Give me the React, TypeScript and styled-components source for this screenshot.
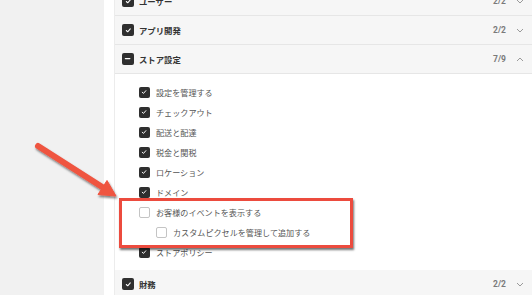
import React from "react";
import styled, { createGlobalStyle } from "styled-components";

const Global = createGlobalStyle`
  html, body { margin: 0; padding: 0; background: #fff; }
  body { font-family: "Noto Sans CJK JP", "Noto Sans", sans-serif; }
  * { box-sizing: border-box; }
`;

const Page = styled.div`
  position: relative;
  width: 532px;
  height: 295px;
  display: flex;
  overflow: hidden;
  background: #fff;
`;

const Sidebar = styled.div`
  width: 104px;
  flex: none;
  background: #f1f1f1;
`;

const Gutter = styled.div`
  width: 10px;
  flex: none;
  background: #fff;
`;

const Panel = styled.div`
  flex: 1;
  border-left: 1px solid #ececec;
  overflow: hidden;
`;

const List = styled.div`
  margin-top: -13px;
  display: flex;
  flex-direction: column;
`;

const Header = styled.div`
  height: 29px;
  display: flex;
  align-items: center;
  padding: 0 8px 0 7px;
  background: #f6f6f6;
  border-bottom: 1px solid #e6e6e6;
`;

const HeaderLabel = styled.span`
  flex: 1;
  margin-left: 5px;
  font-size: 8.4px;
  font-weight: 700;
  color: #333;
`;

const Count = styled.span`
  font-family: Roboto, "Liberation Sans", sans-serif;
  font-size: 8.5px;
  font-weight: 700;
  color: #7a7a7a;
  margin-right: 10px;
`;

const Body = styled.div`
  padding: 8px 0 8px 24px;
  display: flex;
  flex-direction: column;
  background: #fff;
`;

const Item = styled.div<{ $indent?: number }>`
  height: 20px;
  display: flex;
  align-items: center;
  padding-left: ${(p) => p.$indent ?? 0}px;
`;

const ItemLabel = styled.span`
  margin-left: 6px;
  font-size: 8.1px;
  color: #555;
`;

const Highlight = styled.div`
  position: relative;
  display: flex;
  flex-direction: column;
  &::after {
    content: "";
    position: absolute;
    left: -20px;
    top: -4px;
    width: 228px;
    height: 44px;
    border: 3px solid #ec4b3e;
    box-shadow: 1px 2px 2px rgba(0, 0, 0, 0.55);
    pointer-events: none;
  }
`;

const Box = styled.span<{ $size: number; $on: boolean }>`
  width: ${(p) => p.$size}px;
  height: ${(p) => p.$size}px;
  flex: none;
  border-radius: 2px;
  display: inline-flex;
  align-items: center;
  justify-content: center;
  background: ${(p) => (p.$on ? "#2f2f2f" : "#fff")};
  border: ${(p) => (p.$on ? "none" : "1px solid #c4c4c4")};
`;

const Overlay = styled.svg`
  position: absolute;
  left: 0;
  top: 0;
  pointer-events: none;
`;

type State = "on" | "off" | "mixed";

const Check = ({ size, state }: { size: number; state: State }) => (
  <Box $size={size} $on={state !== "off"}>
    {state === "on" && (
      <svg width={size * 0.55} height={size * 0.55} viewBox="0 0 10 10">
        <path d="M2 5.3 L4.1 7.3 L8 2.8" stroke="#fff" strokeWidth="1.6" fill="none" strokeLinecap="round" strokeLinejoin="round" />
      </svg>
    )}
    {state === "mixed" && (
      <svg width={size * 0.6} height={size * 0.6} viewBox="0 0 10 10">
        <path d="M2 5 H8" stroke="#fff" strokeWidth="2" strokeLinecap="round" />
      </svg>
    )}
  </Box>
);

const Chevron = ({ up }: { up?: boolean }) => (
  <svg width="8" height="5" viewBox="0 0 8 5">
    <path d={up ? "M1 4 L4 1 L7 4" : "M1 1 L4 4 L7 1"} stroke="#9a9a9a" strokeWidth="1" fill="none" />
  </svg>
);

const Group = ({ label, count, state, open }: { label: string; count: string; state: State; open?: boolean }) => (
  <Header>
    <Check size={12} state={state} />
    <HeaderLabel>{label}</HeaderLabel>
    <Count>{count}</Count>
    <Chevron up={open} />
  </Header>
);

const Row = ({ label, state, indent }: { label: string; state: State; indent?: number }) => (
  <Item $indent={indent}>
    <Check size={11} state={state} />
    <ItemLabel>{label}</ItemLabel>
  </Item>
);

export default function App() {
  return (
    <>
      <Global />
      <Page>
        <Sidebar />
        <Gutter />
        <Panel>
          <List>
            <Group label="ユーザー" count="2/2" state="on" />
            <Group label="アプリ開発" count="2/2" state="on" />
            <Group label="ストア設定" count="7/9" state="mixed" open />
            <Body>
              <Row label="設定を管理する" state="on" />
              <Row label="チェックアウト" state="on" />
              <Row label="配送と配達" state="on" />
              <Row label="税金と関税" state="on" />
              <Row label="ロケーション" state="on" />
              <Row label="ドメイン" state="on" />
              <Highlight>
                <Row label="お客様のイベントを表示する" state="off" />
                <Row label="カスタムピクセルを管理して追加する" state="off" indent={17} />
              </Highlight>
              <Row label="ストアポリシー" state="on" />
            </Body>
            <Group label="財務" count="2/2" state="on" />
          </List>
        </Panel>
        <Overlay width="532" height="295" viewBox="0 0 532 295">
          <defs>
            <filter id="sh" x="-20%" y="-20%" width="140%" height="140%">
              <feDropShadow dx="1" dy="2" stdDeviation="1.2" floodColor="#000" floodOpacity="0.5" />
            </filter>
          </defs>
          <g filter="url(#sh)" fill="#ef5441" stroke="#ef5441">
            <line x1="38" y1="146" x2="103" y2="187.5" strokeWidth="6" strokeLinecap="round" />
            <polygon points="116,196 98,194.5 107,180.5" strokeWidth="1" strokeLinejoin="round" />
          </g>
        </Overlay>
      </Page>
    </>
  );
}
